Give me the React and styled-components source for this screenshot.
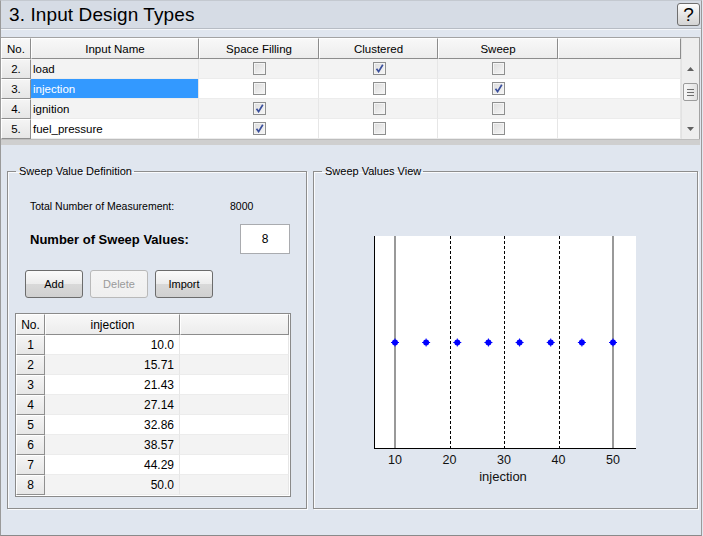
import React from 'react';
import styled, { createGlobalStyle } from 'styled-components';

const GlobalStyle = createGlobalStyle`
  html, body {
    margin: 0;
    padding: 0;
    background: #e0e6ef;
  }
  * {
    box-sizing: border-box;
  }
`;

const UI_FONT = `"Liberation Sans", Arial, sans-serif`;

const Frame = styled.div`
  width: 702px;
  height: 536px;
  background: #e0e6ef;
  font-family: ${UI_FONT};
  color: #000;
  display: flex;
  flex-direction: column;
  border-left: 1px solid #9a9a9a;
  border-right: 1px solid #9a9a9a;
  border-bottom: 1px solid #8a8a8a;
  border-top: 1px solid #c4c9d0;
  overflow: hidden;
`;

const TitleBar = styled.div`
  height: 28px;
  flex: none;
  background: #d6dce5;
  border-bottom: 1px solid #b7bcc4;
  display: flex;
  align-items: center;
  justify-content: space-between;
  padding: 0 1px 0 8px;
`;

const Title = styled.h1`
  margin: 0;
  font-size: 19px;
  font-weight: normal;
  letter-spacing: 0.1px;
  line-height: 22px;
`;

const HelpButton = styled.button`
  width: 23px;
  height: 23px;
  padding: 0;
  border: 1px solid #6f6f6f;
  border-radius: 3px;
  background: linear-gradient(#fdfdfd, #e4e4e4 55%, #d4d4d4);
  font-family: ${UI_FONT};
  font-size: 19px;
  line-height: 20px;
  color: #000;
`;

const Band = styled.div`
  height: 8px;
  flex: none;
  border-top: 1px solid #f4f6f9;
`;

const TableWrap = styled.div`
  display: flex;
  width: 699px;
  border-top: 1px solid #a3a3a3;
  border-right: 1px solid #a3a3a3;
  background: #fff;
`;

const InputGrid = styled.div`
  display: grid;
  grid-template-columns: 30px 168px 120px 119px 120px 123px;
  grid-auto-rows: 20px;
  grid-template-rows: 21px;
  font-size: 11.5px;
`;

const HeadCell = styled.div`
  display: flex;
  align-items: center;
  justify-content: center;
  background: linear-gradient(#f8f8f8, #ececec);
  border-top: 1px solid #fff;
  border-left: 1px solid #fff;
  border-right: 1px solid #8c8c8c;
  border-bottom: 1px solid #8c8c8c;
  white-space: nowrap;
`;

const NumCell = styled(HeadCell)`
  background: linear-gradient(#f4f4f4, #e6e6e6);
  border-right-color: #8f8f8f;
  border-bottom-color: #8f8f8f;
`;

const Cell = styled.div`
  display: flex;
  align-items: center;
  justify-content: ${p => (p.$center ? 'center' : p.$right ? 'flex-end' : 'flex-start')};
  padding: ${p => (p.$right ? '0 5px 0 0' : '0 0 0 2px')};
  background: ${p => (p.$selected ? '#3399ff' : p.$alt ? '#f3f3f3' : '#fff')};
  color: ${p => (p.$selected ? '#fff' : '#000')};
  border-right: 1px solid #e6e6e6;
  border-bottom: 1px solid #ececec;
  white-space: nowrap;
`;

const Box = styled.span`
  width: 13px;
  height: 13px;
  border: 1px solid #8e8f8f;
  background: linear-gradient(135deg, #dcdcdc, #f6f6f6);
  box-shadow: inset 0 0 0 1px #f4f4f4;
  display: flex;
  align-items: center;
  justify-content: center;
`;

const Scrollbar = styled.div`
  width: 18px;
  background: #eeeeee;
  border-left: 1px solid #e2e2e2;
  display: flex;
  flex-direction: column;
  align-items: center;
  padding-top: 21px;
`;

const ArrowBtn = styled.div`
  height: 20px;
  width: 100%;
  display: flex;
  align-items: center;
  justify-content: center;
`;

const Thumb = styled.div`
  width: 15px;
  height: 18px;
  margin: 4px 0 4px;
  border: 1px solid #9c9c9c;
  border-radius: 2px;
  background: linear-gradient(90deg, #f7f7f7, #e2e2e2);
  display: flex;
  flex-direction: column;
  align-items: center;
  justify-content: center;
  gap: 2px;
`;

const Grip = styled.span`
  width: 7px;
  height: 1px;
  background: #6e6e6e;
`;

const TrackGap = styled.div`
  flex: 1;
`;

const HStrip = styled.div`
  height: 6px;
  flex: none;
  width: 699px;
  background: #cfcfcf;
  border-top: 1px solid #bdbdbd;
`;

const Body = styled.div`
  flex: 1;
  display: flex;
  gap: 6px;
  padding: 20px 0 0 6px;
`;

const Group = styled.fieldset`
  margin: 0;
  padding: 0;
  width: ${p => p.$w}px;
  height: 344px;
  min-width: 0;
  border: 1px solid #8d8d8d;
  box-shadow: inset 1px 1px 0 #fafbfd, 1px 1px 0 #fafbfd;
  display: flex;
  flex-direction: column;
`;

const Legend = styled.legend`
  margin-left: 8px;
  padding: 0 2px 0 3px;
  font-size: 11px;
  line-height: 13px;
  color: #000;
`;

const InfoRow = styled.div`
  display: flex;
  align-items: center;
  padding-left: 22px;
  margin-top: ${p => p.$top || 0}px;
  font-size: 10.5px;
  line-height: 13px;
`;

const InfoLabel = styled.span`
  width: 200px;
`;

const SweepCountRow = styled.div`
  display: flex;
  align-items: center;
  padding-left: 22px;
  margin-top: 11px;
`;

const BigLabel = styled.span`
  width: 210px;
  font-size: 13px;
  font-weight: bold;
`;

const CountInput = styled.div`
  width: 50px;
  height: 30px;
  background: #fff;
  border: 1px solid #a9abaf;
  display: flex;
  align-items: center;
  justify-content: center;
  font-size: 12px;
`;

const ButtonRow = styled.div`
  display: flex;
  gap: 7px;
  padding-left: 17px;
  margin-top: 16px;
`;

const Button = styled.button`
  width: 58px;
  height: 28px;
  padding: 0;
  border: 1px solid ${p => (p.disabled ? '#b9b9b9' : '#6c6c6c')};
  border-radius: 3px;
  background: ${p =>
    p.disabled
      ? 'linear-gradient(#f5f5f5, #efefef)'
      : 'linear-gradient(#fbfbfb, #ececec 50%, #d9d9d9 51%, #d0d0d0)'};
  font-family: ${UI_FONT};
  font-size: 11px;
  color: ${p => (p.disabled ? '#9a9a9a' : '#000')};
`;

const SweepGrid = styled.div`
  display: grid;
  grid-template-columns: 29px 135px 109px;
  grid-template-rows: 21px;
  grid-auto-rows: 20px;
  width: 276px;
  height: 184px;
  margin: 15px 0 0 7px;
  border: 1px solid #8a8a8a;
  background: #fff;
  font-size: 12px;
  align-content: start;
`;

const ChartArea = styled.div`
  padding: 52px 0 0 50px;
`;

const CheckBox = ({ checked }) => (
  <Box>
    {checked && (
      <svg width="9" height="9" viewBox="0 0 9 9">
        <path d="M1.5 4.8 L3.6 7.6 L7.8 0.8" fill="none" stroke="#3a4f9c" strokeWidth="1.7" />
      </svg>
    )}
  </Box>
);

const inputs = [
  { no: '2.', name: 'load', flags: [false, true, false] },
  { no: '3.', name: 'injection', flags: [false, false, true], selected: true },
  { no: '4.', name: 'ignition', flags: [true, false, false] },
  { no: '5.', name: 'fuel_pressure', flags: [true, false, false] },
];

const sweepValues = ['10.0', '15.71', '21.43', '27.14', '32.86', '38.57', '44.29', '50.0'];

const Triangle = ({ up }) => (
  <svg width="7" height="4" viewBox="0 0 7 4">
    <path d={up ? 'M0 4 L3.5 0 L7 4 Z' : 'M0 0 L3.5 4 L7 0 Z'} fill="#606060" />
  </svg>
);

const SweepChart = () => {
  // page x = 364 + svg x, page y = 230 + svg y
  const toX = v => 31 + (v - 10) * 5.45;
  const ticks = [10, 20, 30, 40, 50];
  return (
    <svg width="282" height="260" viewBox="0 0 282 260">
      <rect x="10" y="6" width="262" height="212" fill="#fff" />
      <line x1={toX(10)} y1="6" x2={toX(10)} y2="218" stroke="#999" strokeWidth="2" />
      <line x1={toX(50)} y1="6" x2={toX(50)} y2="218" stroke="#999" strokeWidth="2" />
      {[20, 30, 40].map(v => (
        <line
          key={v}
          x1={Math.round(toX(v)) + 0.5}
          y1="6"
          x2={Math.round(toX(v)) + 0.5}
          y2="218"
          stroke="#000"
          strokeWidth="1"
          strokeDasharray="3 2"
        />
      ))}
      <line x1="10.5" y1="6" x2="10.5" y2="218.5" stroke="#000" strokeWidth="1" />
      <line x1="10" y1="218.5" x2="272" y2="218.5" stroke="#000" strokeWidth="1" />
      {sweepValues.map(v => (
        <g key={v} fill="#0000ff">
          <circle cx={toX(parseFloat(v))} cy="112.5" r="3" />
          <rect x={toX(parseFloat(v)) - 0.5} y="108.5" width="1" height="8" />
          <rect x={toX(parseFloat(v)) - 4} y="112" width="8" height="1" />
        </g>
      ))}
      {ticks.map(v => (
        <text
          key={v}
          x={toX(v)}
          y="234"
          textAnchor="middle"
          fontFamily='"Liberation Sans", Arial, sans-serif'
          fontSize="12.5"
          fill="#111"
        >
          {v}
        </text>
      ))}
      <text
        x="139"
        y="251"
        textAnchor="middle"
        fontFamily='"Liberation Sans", Arial, sans-serif'
        fontSize="13"
        fill="#111"
      >
        injection
      </text>
    </svg>
  );
};

const App = () => (
  <>
    <GlobalStyle />
    <Frame>
      <TitleBar>
        <Title>3. Input Design Types</Title>
        <HelpButton>?</HelpButton>
      </TitleBar>
      <Band />
      <TableWrap>
        <InputGrid>
          <HeadCell>No.</HeadCell>
          <HeadCell>Input Name</HeadCell>
          <HeadCell>Space Filling</HeadCell>
          <HeadCell>Clustered</HeadCell>
          <HeadCell>Sweep</HeadCell>
          <HeadCell />
          {inputs.map((row, i) => (
            <React.Fragment key={row.no}>
              <NumCell>{row.no}</NumCell>
              <Cell $alt={i % 2 === 0} $selected={row.selected}>
                {row.name}
              </Cell>
              {row.flags.map((f, j) => (
                <Cell key={j} $center $alt={i % 2 === 0}>
                  <CheckBox checked={f} />
                </Cell>
              ))}
              <Cell $alt={i % 2 === 0} />
            </React.Fragment>
          ))}
        </InputGrid>
        <Scrollbar>
          <ArrowBtn>
            <Triangle up />
          </ArrowBtn>
          <Thumb>
            <Grip />
            <Grip />
            <Grip />
          </Thumb>
          <TrackGap />
          <ArrowBtn>
            <Triangle />
          </ArrowBtn>
        </Scrollbar>
      </TableWrap>
      <HStrip />
      <Body>
        <Group $w={300}>
          <Legend>Sweep Value Definition</Legend>
          <InfoRow $top={22}>
            <InfoLabel>Total Number of Measurement:</InfoLabel>
            <span>8000</span>
          </InfoRow>
          <SweepCountRow>
            <BigLabel>Number of Sweep Values:</BigLabel>
            <CountInput>8</CountInput>
          </SweepCountRow>
          <ButtonRow>
            <Button>Add</Button>
            <Button disabled>Delete</Button>
            <Button>Import</Button>
          </ButtonRow>
          <SweepGrid>
            <HeadCell>No.</HeadCell>
            <HeadCell>injection</HeadCell>
            <HeadCell />
            {sweepValues.map((v, i) => (
              <React.Fragment key={v}>
                <NumCell>{i + 1}</NumCell>
                <Cell $right $alt={i % 2 === 1}>
                  {v}
                </Cell>
                <Cell $alt={i % 2 === 1} />
              </React.Fragment>
            ))}
          </SweepGrid>
        </Group>
        <Group $w={385}>
          <Legend>Sweep Values View</Legend>
          <ChartArea>
            <SweepChart />
          </ChartArea>
        </Group>
      </Body>
    </Frame>
  </>
);

export default App;
